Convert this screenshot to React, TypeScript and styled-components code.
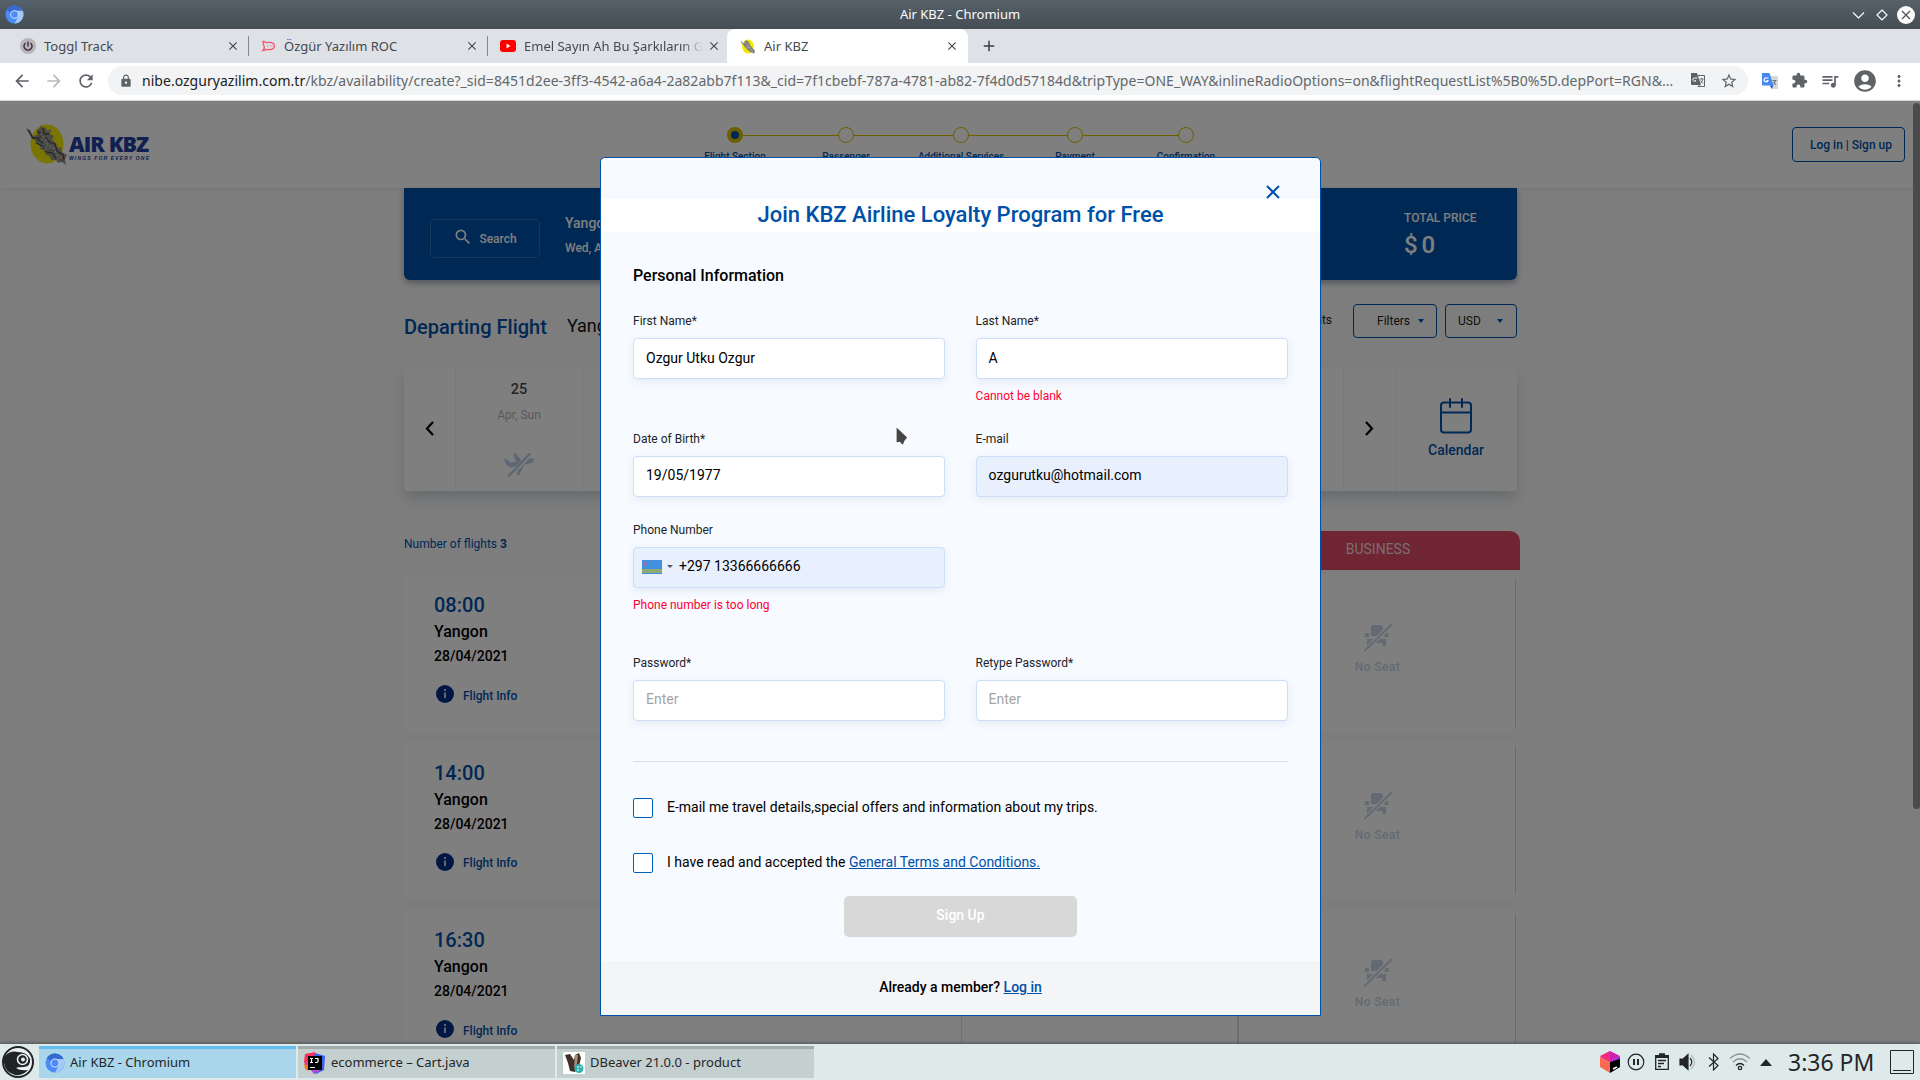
import React from "react";
import styled, { createGlobalStyle } from "styled-components";
import {
  MdArrowBack, MdArrowForward, MdRefresh, MdLock, MdGTranslate, MdStarBorder, MdExtension,
  MdQueueMusic, MdAccountCircle, MdMoreVert, MdSearch, MdClose, MdAdd,
} from "react-icons/md";

const GlobalStyle = createGlobalStyle`
  *, *::before, *::after { box-sizing: border-box; }
  body { margin: 0; overflow: hidden; font-family: Roboto, "Liberation Sans", sans-serif; }
  svg { display: block; flex: none; }
`;

const blue = "#0050a8";
const ui = `"Noto Sans", "DejaVu Sans", sans-serif`;

const Desktop = styled.div`
  width: 1920px;
  height: 1080px;
  display: flex;
  flex-direction: column;
  overflow: hidden;
`;

/* ---------- window frame ---------- */
const TitleBar = styled.div`
  height: 29px;
  display: grid;
  grid-template-columns: 1fr auto 1fr;
  align-items: center;
  padding: 0 5px;
  background: linear-gradient(#566169, #454c54);
  color: #fcfcfc;
  font: 13px/29px ${ui};
`;
const WindowButtons = styled.div`
  display: flex;
  justify-content: flex-end;
`;
const TabStrip = styled.div`
  height: 34px;
  display: flex;
  align-items: center;
  background: #dee1e6;
  padding-left: 10px;
`;
const Tab = styled.div<{ $active?: boolean; $line?: boolean }>`
  position: relative;
  width: ${(p) => (p.$active ? 241 : 239)}px;
  height: 34px;
  display: flex;
  align-items: center;
  padding: 0 9px 0 ${(p) => (p.$active ? 13 : 10)}px;
  border-radius: 8px 8px 0 0;
  background: ${(p) => (p.$active ? "#fff" : "transparent")};
  color: #45494d;
  &::after {
    content: "";
    display: ${(p) => (p.$line ? "block" : "none")};
    position: absolute;
    right: 0;
    top: 7px;
    height: 20px;
    width: 1px;
    background: #85888c;
  }
`;
const TabTitle = styled.span<{ $fade?: boolean }>`
  flex: 1;
  margin: 0 4px 0 8px;
  white-space: nowrap;
  font: 13px/20px ${ui};
  ${(p) => p.$fade && "mask-image: linear-gradient(90deg, #000 88%, transparent);"}
`;
const NewTab = styled.div`
  margin-left: 12px;
  color: #3c4043;
`;
const Toolbar = styled.div`
  height: 38px;
  display: flex;
  align-items: center;
  padding: 0 12px 2px;
  background: #fff;
  border-bottom: 1px solid #d5d7db;
  color: #5f6368;
`;
const NavButtons = styled.div`
  display: flex;
  gap: 12px;
  width: 96px;
`;
const Omnibox = styled.div`
  width: 1640px;
  height: 29px;
  display: flex;
  align-items: center;
  padding: 0 10px 0 11px;
  border-radius: 15px;
  background: #f1f3f4;
`;
const Url = styled.div`
  flex: 1;
  margin-left: 9px;
  white-space: nowrap;
  color: #64686c;
  font: 14px/28px ${ui};
  letter-spacing: 0.027px;
  span { color: #202124; }
`;
const OmniIcons = styled.div`
  display: flex;
  gap: 14px;
`;
const Extensions = styled.div`
  display: flex;
  align-items: center;
  justify-content: space-between;
  margin-left: 13px;
  width: 147px;
`;

/* ---------- page ---------- */
const Page = styled.div`
  position: relative;
  height: 943px;
  overflow: hidden;
  background: #fbfbfb;
`;
const Header = styled.header`
  height: 87px;
  display: grid;
  grid-template-columns: 701px 467px 1fr;
  padding: 0 15px 0 26px;
  background: #fff;
  box-shadow: 0 1px 5px rgba(0, 0, 0, 0.08);
`;
const Brand = styled.div`
  display: flex;
  padding-top: 22px;
`;
const BrandText = styled.div`
  margin: 10px 0 0 1px;
  color: #2340a0;
  width: 82px;
`;
const BrandName = styled.div`
  font: 800 21.5px/22px "Open Sans", sans-serif;
  letter-spacing: -0.9px;
  white-space: nowrap;
`;
const BrandLine = styled.div`
  font: italic 700 5px/6px "Liberation Sans", sans-serif;
  letter-spacing: 1.15px;
  white-space: nowrap;
`;
const Steps = styled.div`
  display: flex;
  padding-top: 26px;
`;
const Step = styled.div`
  width: 16px;
  display: flex;
  flex-direction: column;
  align-items: center;
  gap: 8px;
  white-space: nowrap;
  color: ${blue};
  font: 500 10px/12px Roboto, sans-serif;
`;
const StepDot = styled.div<{ $on?: boolean }>`
  flex: none;
  width: 16px;
  height: 16px;
  border-radius: 50%;
  border: ${(p) => (p.$on ? "4px" : "1px")} solid #d8be00;
  background: ${(p) => (p.$on ? blue : "#fff")};
`;
const StepLine = styled.div<{ $span: number }>`
  flex: ${(p) => p.$span};
  height: 1px;
  margin-top: 8px;
  background: #d8be00;
`;
const LoginButton = styled.button`
  justify-self: end;
  width: 113px;
  height: 35px;
  margin-top: 26px;
  padding: 0 0 0 5px;
  border: 1px solid ${blue};
  border-radius: 4px;
  background: none;
  color: ${blue};
  font: 500 12px Roboto, sans-serif;
`;
const Content = styled.main`
  width: 1113px;
  margin-left: 404px;
`;
const SearchPanel = styled.section`
  height: 92px;
  display: flex;
  padding: 0 0 0 26px;
  border-radius: 0 0 6px 6px;
  background: ${blue};
  color: #fff;
  box-shadow: 0 3px 6px rgba(0, 30, 60, 0.35);
`;
const SearchButton = styled.div`
  width: 110px;
  height: 39px;
  margin-top: 31px;
  display: flex;
  align-items: center;
  justify-content: center;
  gap: 6px;
  border: 1px solid #2c6cb4;
  border-radius: 5px;
  font: 500 12px Roboto, sans-serif;
  svg { margin-top: -4px; }
`;
const Route = styled.div`
  margin: 25px 0 0 25px;
  font: 500 14px/20px Roboto, sans-serif;
  small { display: block; margin-top: 5px; font-size: 12px; }
`;
const Total = styled.div`
  width: 113px;
  margin: 20px 0 0 auto;
  font: 500 12px/20px Roboto, sans-serif;
  strong { display: block; margin-top: 2px; font: 500 24px/30px Roboto, sans-serif; word-spacing: -2px; }
`;
const DepartRow = styled.div`
  height: 88px;
  display: flex;
  padding-top: 24px;
`;
const DepartTitle = styled.h2`
  margin: 10px 20px 0 0;
  color: ${blue};
  font: 500 20px/26px Roboto, sans-serif;
`;
const DepartFrom = styled.span`
  margin-top: 9px;
  font: 400 18px/26px Roboto, sans-serif;
  color: #111;
`;
const FilterSide = styled.div`
  margin-left: auto;
  display: flex;
  font: 400 12px/32px Roboto, sans-serif;
  color: #222;
`;
const Select = styled.div<{ $w: number; $l: number; $gap: number }>`
  width: ${(p) => p.$w}px;
  height: 34px;
  margin-left: 8px;
  padding-left: ${(p) => p.$l}px;
  display: flex;
  align-items: center;
  gap: ${(p) => p.$gap}px;
  border: 1px solid ${blue};
  border-radius: 4px;
  &:first-of-type { margin-left: 21px; }
`;
const Caret = styled.i<{ $c?: string; $s?: number }>`
  border: ${(p) => p.$s || 3.5}px solid transparent;
  border-top: ${(p) => p.$s || 4}px solid ${(p) => p.$c || blue};
  border-bottom: 0;
`;
const DateStrip = styled.section`
  height: 123px;
  display: flex;
  border-radius: 4px;
  background: #fff;
  box-shadow: 0 8px 14px rgba(30, 60, 90, 0.18);
`;
const StripCell = styled.div<{ $w?: number }>`
  ${(p) => (p.$w ? `width: ${p.$w}px;` : "flex: 1;")}
  display: flex;
  flex-direction: column;
  align-items: center;
  justify-content: center;
  padding-bottom: 3px;
  border-right: 1px solid #eee;
  color: ${blue};
  font: 500 14px/18px Roboto, sans-serif;
  &:last-child { border: 0; padding-right: 1px; }
`;
const DayNumber = styled.div`
  color: #4b4b4b;
  font: 500 14.5px/20px Roboto, sans-serif;
`;
const DayName = styled.div`
  margin: 6px 0 29px;
  color: #b3b3b3;
  font: 400 12px/18px Roboto, sans-serif;
`;
const Results = styled.div`
  height: 84px;
  display: flex;
  justify-content: space-between;
  padding-top: 40px;
  margin-right: -3px;
  color: ${blue};
  font: 400 12px/26px Roboto, sans-serif;
`;
const Business = styled.div`
  width: 282px;
  height: 39px;
  padding-right: 2px;
  border-radius: 0 10px 0 0;
  background: #e04a64;
  color: #f3dde0;
  text-align: center;
  font: 400 14px/37px Roboto, sans-serif;
`;
const Card = styled.article`
  height: 156px;
  margin-bottom: 11.4px;
  display: grid;
  grid-template-columns: 558px 277px 277px;
  border-radius: 4px;
  background: #fff;
`;
const FlightCell = styled.div`
  padding: 17.4px 0 0 30px;
  border-right: 1px solid #e2e2e2;
`;
const EmptyCell = styled.div`
  border-right: 2px solid #dedede;
`;
const SeatCell = styled.div`
  margin: 4px 0;
  display: flex;
  flex-direction: column;
  align-items: center;
  padding: 45.4px 0 0 1px;
  border-right: 1px solid #d4d4d4;
  color: #c7d5e4;
  font: 500 12px/18px Roboto, sans-serif;
  letter-spacing: 0.4px;
  svg { margin-bottom: 6px; }
`;
const Time = styled.div`
  color: ${blue};
  font: 500 20px/26px Roboto, sans-serif;
`;
const City = styled.div`
  font: 500 16px/26px Roboto, sans-serif;
  margin-top: 1px;
`;
const Day = styled.div`
  font: 500 14px/22px Roboto, sans-serif;
`;
const Info = styled.div`
  display: flex;
  align-items: center;
  gap: 9px;
  margin: 16.5px 0 0 2px;
  color: ${blue};
  font: 500 12px/18px Roboto, sans-serif;
  span { padding-top: 3px; }
`;

/* ---------- dialog ---------- */
const Overlay = styled.div`
  position: absolute;
  inset: 0;
  background: rgba(0, 0, 0, 0.5);
`;
const Scrollbar = styled.div`
  position: absolute;
  right: 0;
  top: 2px;
  width: 7px;
  height: 706px;
  border-radius: 4px;
  background: #4b4b4b;
`;
const Dialog = styled.div`
  width: 721px;
  height: 859px;
  margin: 56px 0 0 600px;
  display: flex;
  flex-direction: column;
  border: 1px solid ${blue};
  border-radius: 5px 5px 0 0;
  background: #f7faff;
  overflow: hidden;
`;
const DialogTop = styled.div`
  height: 41px;
  flex: none;
  display: flex;
  justify-content: flex-end;
  padding: 27px 40px 0 0;
`;
const DialogTitle = styled.h1`
  flex: none;
  height: 33px;
  margin: 0;
  background: #fff;
  color: ${blue};
  text-align: center;
  font: 500 22px/31px Roboto, sans-serif;
`;
const Form = styled.div`
  flex: 1;
  display: flex;
  flex-direction: column;
  padding: 34px 32px 0;
`;
const SectionTitle = styled.h3`
  margin: 0 0 27px;
  font: 500 16px/20px Roboto, sans-serif;
`;
const Fields = styled.div`
  display: grid;
  grid-template-columns: 312px 312px;
  grid-template-rows: 118px 91px 133px 66px;
  column-gap: 30.6px;
`;
const Field = styled.div<{ $col: number }>`
  grid-column: ${(p) => p.$col};
  font: 400 12px/16px Roboto, sans-serif;
  color: #212529;
`;
const Box = styled.div<{ $filled?: boolean; $lift?: number; $hint?: boolean }>`
  height: 41px;
  margin: 9px 0;
  display: flex;
  align-items: center;
  padding: 0 12px ${(p) => p.$lift || 1}px;
  border: 1px solid #cbdff8;
  border-radius: 4px;
  background: ${(p) => (p.$filled ? "#e8f0fe" : "#fff")};
  color: ${(p) => (p.$hint ? "#a5a5a5" : "#000")};
  box-shadow: 0 3px 8px rgba(60, 90, 140, 0.09);
  font-size: 14px;
`;
const PhonePrefix = styled.div`
  display: flex;
  align-items: center;
  gap: 5px;
  margin: 1px 6px 0 -4px;
`;
const ErrorText = styled.div`
  color: #ff0033;
`;
const Rule = styled.div`
  height: 1px;
  margin: 40px 0 36px;
  background: #dadfe4;
`;
const CheckRow = styled.div`
  height: 20px;
  display: flex;
  gap: 14px;
  margin-bottom: 35px;
  font: 400 14px/18px Roboto, sans-serif;
  & + & { margin-bottom: 23px; }
`;
const Check = styled.div`
  width: 20px;
  height: 20px;
  border: 1px solid #0060bb;
  border-radius: 2px;
  background: #fff;
`;
const Link = styled.span`
  color: ${blue};
  text-decoration: underline;
`;
const Submit = styled.button`
  align-self: center;
  width: 233px;
  height: 41px;
  padding: 0 0 3px;
  border: 0;
  border-radius: 5px;
  background: #d8d8d8;
  color: #fff;
  font: 500 14px Roboto, sans-serif;
`;
const DialogFooter = styled.div`
  flex: none;
  height: 54px;
  background: #f4f5f7;
  text-align: center;
  font: 500 14px/52px Roboto, sans-serif;
`;
const Pointer = styled.svg`
  position: absolute;
  left: 894px;
  top: 323px;
`;

/* ---------- taskbar ---------- */
const Taskbar = styled.div`
  position: relative;
  height: 36px;
  display: flex;
  align-items: center;
  gap: 2px;
  padding-left: 2px;
  background: #deeaea;
  color: #232629;
  box-shadow: 0 -1px 3px rgba(0, 0, 0, 0.35);
`;
const Task = styled.div<{ $active?: boolean }>`
  width: 257px;
  height: 32px;
  display: flex;
  align-items: center;
  gap: 6px;
  padding: 0 6px;
  border-top: 3px solid ${(p) => (p.$active ? "#64bdec" : "#a1abab")};
  background: ${(p) => (p.$active ? "#a9d6ea" : "#c4cfcf")};
  font: 13px/24px ${ui};
  span { padding-bottom: 3px; }
  svg { margin: 0 -1px 1px 0; }
  &:first-of-type { margin-left: 3px; }
`;
const Tray = styled.div`
  margin-left: auto;
  width: 320px;
  display: flex;
  align-items: center;
`;
const TrayIcon = styled.div<{ $w: number }>`
  width: ${(p) => p.$w}px;
`;
const Clock = styled.div`
  width: 102px;
  font: 23px/34px ${ui};
  white-space: nowrap;
`;

const Chromium = ({ size = 20 }: { size?: number }) => (
  <svg width={size} height={size} viewBox="0 0 20 20">
    <circle cx="10" cy="10" r="9.5" fill="#4b8bf5" />
    <path d="M10 10 1.8 5.2A9.5 9.5 0 0 1 18.5 6Z" fill="#356ad0" />
    <path d="M10 6h8.600A9.500 9.500 0 0 1 10 19.500L14 12Z" fill="#a5c8fb" />
    <circle cx="10" cy="10" r="4.6" fill="#c9defd" />
    <circle cx="10" cy="10" r="3.5" fill="#4e8bf2" />
  </svg>
);

const Angel = ({ w, h }: { w: number; h: number }) => (
  <svg width={w} height={h} viewBox="0 0 42 42">
    <ellipse cx="21" cy="21" rx="16.5" ry="19.5" fill="#f4e800" />
    <path d="M0 5l4 2 3 6 4-1 0-5 3-2 1-3 2 3 3-1 1 4 4-2-1 5 4 2-2 4 4 3 1 4 4 1 1 4 5 3-2 4 1 6-4-3-4 1-2-3-5 0-1-4-4-1-2-5-4-1 0-4-4-2-1-3-3-1-3-6Z" fill="#96948a" />
    <path d="M2 7l5 8 5 0M12 8l3 4-3 5 5 3M17 5l1 6 5 0M10 20l6 3 4 6 7 1 3 6M19 14l4 5 6 2 2 7 6 4 1 5" fill="none" stroke="#4d4c48" strokeWidth="1.300" />
    <path d="M14 16l5 2 1 5 5 2 4 6" fill="none" stroke="#74b3cf" strokeWidth="1.500" strokeDasharray="3 2" />
    <path d="M14 11l6 5 2 6 6 3 3 7 6 4M15 24l6 4" fill="none" stroke="#d8d2c4" strokeWidth="1.200" strokeDasharray="2 2" />
    <path d="M13 13l2 2M24 27l3 1M34 36l3 2" stroke="#a8624e" strokeWidth="1.200" />
  </svg>
);

const NoFlight = () => (
  <svg width="31" height="24" viewBox="0 0 31 24" fill="#b9cfe6">
    <path d="M0 6.500l2.500-.5 3.500 3.500 6.500-.500L9 .8l2.500-.8 6 7.500 7-2Q29 4.500 30.500 6.500 30.500 9 26 10.500L9 14Q4 15 2 11Z" />
    <path d="M14 13.500l6-2-2 5-3 5.500-2 .5Z" />
    <path d="M27 0 5 24" stroke="#fff" strokeWidth="4.500" />
    <path d="M25.500 1 5 22.800" stroke="#b9cfe6" strokeWidth="2.400" strokeLinecap="round" />
  </svg>
);

const NoSeatIcon = () => (
  <svg width="28" height="28" viewBox="0 0 28 28" fill="#c7d5e4">
    <path d="M7 3.500Q7 1 9.500 1h7Q19 1 19 3.500V12H7ZM1 9h4v4H1ZM20.500 9h4v4h-4ZM3 15h19v7h-3.500v-3h-12v2H3Z" />
    <path d="M27 1 1 26.500" stroke="#fff" strokeWidth="4.600" />
    <path d="M27 1 1 26.500" stroke="#c7d5e4" strokeWidth="2" strokeLinecap="round" />
  </svg>
);

const InfoIcon = () => (
  <svg width="18" height="18" viewBox="0 0 18 18">
    <circle cx="9" cy="9" r="9" fill="#003087" />
    <path d="M9 4v2M9 7.500V13" stroke="#dbe3ef" strokeWidth="1.800" />
  </svg>
);

const Chevron = ({ left }: { left?: boolean }) => (
  <svg width="9" height="15" viewBox="0 0 9 15" fill="none" stroke="#000" strokeWidth="2.200">
    <path d={left ? "M8 1 2 7.500 8 14" : "M1 1l6 6.500L1 14"} />
  </svg>
);

const CalendarSvg = styled.svg`
  margin-bottom: 7px;
`;
const CalendarIcon = () => (
  <CalendarSvg width="32" height="36" viewBox="0 0 32 36" fill="none" stroke={blue} strokeWidth="2">
    <rect x="1" y="4.500" width="30" height="30" rx="3" />
    <path d="M1 14.500h30M10 1v8M22 1v8" strokeLinecap="round" />
  </CalendarSvg>
);

const Flag = () => (
  <svg width="20" height="14" viewBox="0 0 20 14">
    <rect width="20" height="14" fill="#418fde" />
    <path d="M0 10h20M0 12h20" stroke="#a9b44f" strokeWidth="1.400" />
    <path d="M3 1.500v4M1 3.500h4" stroke="#c8648a" strokeWidth="1.200" />
  </svg>
);

const steps = [
  { name: "Flight Section", span: 0 },
  { name: "Passenger", span: 95 },
  { name: "Additional Services", span: 99 },
  { name: "Payment", span: 98 },
  { name: "Confirmation", span: 95 },
];
const times = ["08:00", "14:00", "16:30"];

export default function App() {
  return (
    <Desktop>
      <GlobalStyle />
      <TitleBar>
        <Chromium size={19} />
        <span>Air KBZ - Chromium</span>
        <WindowButtons>
          <svg width="64" height="20" viewBox="0 0 64 20" fill="none" stroke="#fcfcfc" strokeWidth="1.200">
            <path d="M2 7.500 7.500 13 13 7.500M31 5l5 5-5 5-5-5Z" />
            <circle cx="55" cy="10" r="9" fill="#fcfcfc" stroke="none" />
            <path d="M51 6l8 8M59 6l-8 8" stroke="#4b535b" />
          </svg>
        </WindowButtons>
      </TitleBar>
      <TabStrip>
        <Tab $line>
          <svg width="16" height="16" viewBox="0 0 16 16">
            <circle cx="8" cy="8" r="8" fill="#b8b5b6" />
            <path d="M8 3.500v5M5.500 5a4 4 0 1 0 5 0" fill="none" stroke="#412a4c" strokeWidth="1.400" />
          </svg>
          <TabTitle>Toggl Track</TabTitle>
          <MdClose size={14} />
        </Tab>
        <Tab $line>
          <svg width="17" height="12" viewBox="-3 0 17 12" fill="none" stroke="#f5556c" strokeWidth="1.300">
            <path d="M1 1.500q2 0 3 1.200Q12.500 1.500 12.500 6T4 9.300Q3 10.500 1 10.500q2-2 1-4.500T1 1.500Z" />
            <path d="M5 6h1M7.300 6h1M9.500 6h1" strokeWidth="1.200" />
          </svg>
          <TabTitle>Özgür Yazılım ROC</TabTitle>
          <MdClose size={14} />
        </Tab>
        <Tab>
          <svg width="18" height="12" viewBox="-2 0 18 12">
            <rect width="16" height="12" rx="3" fill="#f00" />
            <path d="M6.500 3.500v5l4-2.500Z" fill="#fff" />
          </svg>
          <TabTitle $fade>Emel Sayın Ah Bu Şarkıların G</TabTitle>
          <MdClose size={14} />
        </Tab>
        <Tab $active>
          <Angel w={16} h={15} />
          <TabTitle>Air KBZ</TabTitle>
          <MdClose size={14} />
        </Tab>
        <NewTab><MdAdd size={18} /></NewTab>
      </TabStrip>
      <Toolbar>
        <NavButtons>
          <MdArrowBack size={20} />
          <MdArrowForward size={20} color="#b9bbbe" />
          <MdRefresh size={20} />
        </NavButtons>
        <Omnibox>
          <MdLock size={14} />
          <Url>
            <span>nibe.ozguryazilim.com.tr</span>
            /kbz/availability/create?_sid=8451d2ee-3ff3-4542-a6a4-2a82abb7f113&amp;_cid=7f1cbebf-787a-4781-ab82-7f4d0d57184d&amp;tripType=ONE_WAY&amp;inlineRadioOptions=on&amp;flightRequestList%5B0%5D.depPort=RGN&amp;...
          </Url>
          <OmniIcons>
            <svg width="16" height="16" viewBox="0 0 16 16">
              <path d="M1 1h6l4 12H2q-1 0-1-1Z" fill="#5f6368" />
              <path d="M8 3.500h6.500v11H8l2-2" fill="none" stroke="#5f6368" />
              <path d="M7.500 6H5a1.700 1.700 0 1 0 1 2.500H5" fill="none" stroke="#f1f3f4" />
              <path d="M9.500 7h4M11.500 6v1M13 7q-1 3-2.500 4M10.500 8.500l2.500 3" fill="none" stroke="#5f6368" strokeWidth=".9" />
            </svg>
            <MdStarBorder size={18} />
          </OmniIcons>
        </Omnibox>
        <Extensions>
          <svg width="18" height="18" viewBox="0 0 18 18">
            <path d="M7 4h9q1 0 1 1v11q0 1-1 1h-5Z" fill="#d5d8dc" />
            <path d="M1 1h7.500l4 12.500H2q-1 0-1-1Z" fill="#4688f1" />
            <path d="M9 13.500h3.500L10.500 17Z" fill="#3057c4" />
            <path d="M7.500 6H5.500a2 2 0 1 0 1.500 2.500H5.500" fill="none" stroke="#fff" strokeWidth="1.100" />
            <path d="M11.500 8.500h4M14.500 8.500q-1 3-2 4M12.500 10l2.500 3" fill="none" stroke="#6b7176" />
          </svg>
          <MdExtension size={17} />
          <MdQueueMusic size={20} />
          <MdAccountCircle size={26} />
          <MdMoreVert size={18} />
        </Extensions>
      </Toolbar>

      <Page>
        <Header>
          <Brand>
            <Angel w={42} h={42} />
            <BrandText>
              <BrandName>AIR KBZ</BrandName>
              <BrandLine>WINGS FOR EVERY ONE</BrandLine>
            </BrandText>
          </Brand>
          <Steps>
            {steps.map(({ name, span }, i) => (
              <React.Fragment key={name}>
                {i > 0 && <StepLine $span={span} />}
                <Step>
                  <StepDot $on={i === 0} />
                  {name}
                </Step>
              </React.Fragment>
            ))}
          </Steps>
          <LoginButton>Log in | Sign up</LoginButton>
        </Header>
        <Content>
          <SearchPanel>
            <SearchButton><MdSearch size={20} />Search</SearchButton>
            <Route>Yangon<small>Wed, Apr</small></Route>
            <Total>TOTAL PRICE<strong>$ 0</strong></Total>
          </SearchPanel>
          <DepartRow>
            <DepartTitle>Departing Flight</DepartTitle>
            <DepartFrom>Yangon</DepartFrom>
            <FilterSide>
              <span>Amounts</span>
              <Select $w={84} $l={23} $gap={8}>Filters<Caret /></Select>
              <Select $w={72} $l={12} $gap={16}>USD<Caret /></Select>
            </FilterSide>
          </DepartRow>
          <DateStrip>
            <StripCell $w={52}><Chevron left /></StripCell>
            <StripCell $w={127}>
              <DayNumber>25</DayNumber>
              <DayName>Apr, Sun</DayName>
              <NoFlight />
            </StripCell>
            <StripCell />
            <StripCell $w={52}><Chevron /></StripCell>
            <StripCell $w={121}><CalendarIcon />Calendar</StripCell>
          </DateStrip>
          <Results>
            <span>Number of flights <b>3</b></span>
            <Business>BUSINESS</Business>
          </Results>
          {times.map((t) => (
            <Card key={t}>
              <FlightCell>
                <Time>{t}</Time>
                <City>Yangon</City>
                <Day>28/04/2021</Day>
                <Info><InfoIcon /><span>Flight Info</span></Info>
              </FlightCell>
              <EmptyCell />
              <SeatCell><NoSeatIcon />No Seat</SeatCell>
            </Card>
          ))}
        </Content>
        <Overlay>
          <Dialog>
            <DialogTop>
              <svg width="14" height="14" viewBox="0 0 14 14" stroke={blue} strokeWidth="2">
                <path d="M1 1l12 12M13 1 1 13" />
              </svg>
            </DialogTop>
            <DialogTitle>Join KBZ Airline Loyalty Program for Free</DialogTitle>
            <Form>
              <SectionTitle>Personal Information</SectionTitle>
              <Fields>
                <Field $col={1}>First Name*<Box>Ozgur Utku Ozgur</Box></Field>
                <Field $col={2}>Last Name*<Box>A</Box><ErrorText>Cannot be blank</ErrorText></Field>
                <Field $col={1}>Date of Birth*<Box $lift={3}>19/05/1977</Box></Field>
                <Field $col={2}>E-mail<Box $lift={3} $filled>ozgurutku@hotmail.com</Box></Field>
                <Field $col={1}>
                  Phone Number
                  <Box $lift={3} $filled>
                    <PhonePrefix><Flag /><Caret $c="#555" $s={3} /></PhonePrefix>
                    +297 13366666666
                  </Box>
                  <ErrorText>Phone number is too long</ErrorText>
                </Field>
                <Field $col={1}>Password*<Box $lift={3} $hint>Enter</Box></Field>
                <Field $col={2}>Retype Password*<Box $lift={3} $hint>Enter</Box></Field>
              </Fields>
              <Rule />
              <CheckRow><Check />E-mail me travel details,special offers and information about my trips.</CheckRow>
              <CheckRow><Check /><span>I have read and accepted the <Link>General Terms and Conditions.</Link></span></CheckRow>
              <Submit>Sign Up</Submit>
            </Form>
            <DialogFooter>Already a member? <Link>Log in</Link></DialogFooter>
          </Dialog>
        </Overlay>
        <Scrollbar />
        <Pointer width="16" height="24" viewBox="0 0 16 24">
          <path d="M2 2v17l3.500-.5L9 22l2-5 3-3.500Z" fill="#454545" stroke="#fff" strokeWidth="1.200" />
        </Pointer>
      </Page>

      <Taskbar>
        <svg width="32" height="32" viewBox="0 0 32 32">
          <circle cx="16" cy="16" r="15" fill="#e9f1f1" stroke="#1f2426" strokeWidth="2" />
          <path d="M2 11Q8 4 16 6q9 0 12 7 1 7-6 8-6 0-8 1 4 3 12 2-5 6-13 5Q3 26 2 17Z" fill="#1f2426" />
          <circle cx="20.500" cy="13.500" r="5" fill="none" stroke="#e9f1f1" strokeWidth="1.600" />
          <circle cx="21" cy="13.500" r="2" fill="#e9f1f1" />
        </svg>
        <Task $active><Chromium size={20} /><span>Air KBZ - Chromium</span></Task>
        <Task>
          <svg width="22" height="22" viewBox="0 0 22 22">
            <path d="M1 2 11 0v12L3 18 0 10Z" fill="#fe315d" />
            <path d="M11 1l10 3-1 14-8 4-6-5Z" fill="#3b62f0" />
            <path d="M1 11l8-2 8 9-7 4Z" fill="#b24bd8" />
            <path d="M0 12l5 2-1 5-3-2Z" fill="#f97a12" />
            <rect x="4" y="4" width="14" height="14" fill="#000" />
            <path d="M6 6.500h3M7.500 6.500v4M6 10.500h3M11 6.500h3v3q0 1-1.500 1H11M6 15.500h5" stroke="#fff" fill="none" strokeWidth="1.200" />
          </svg>
          <span>ecommerce – Cart.java</span>
        </Task>
        <Task>
          <svg width="22" height="22" viewBox="0 0 22 22">
            <rect width="22" height="22" rx="1" fill="#fff" />
            <path d="M2 3l5-1 4 6 1-5 4-2 2 5-2 8-4 6-5-1-2-8Z" fill="#40302a" />
            <path d="M12 3l3 0-1 9-3 4Z" fill="#a58a78" />
            <circle cx="16" cy="16.500" r="4.500" fill="#2fb3b5" />
            <path d="M14 15h2M14 18h2M17 15h1.500" stroke="#fff" />
          </svg>
          <span>DBeaver 21.0.0 - product</span>
        </Task>
        <Tray>
          <TrayIcon $w={27}>
            <svg width="20" height="22" viewBox="0 0 20 22">
              <path d="M10 0 20 5 10 11 0 6Z" fill="#d01fb4" />
              <path d="M0 6l10 5v11L0 16Z" fill="#fd6a52" />
              <path d="M0 5 10 0v11Z" fill="#f42a7c" />
              <path d="M20 5v6l-10 0Z" fill="#9a22dd" />
              <path d="M20 8v8l-10 6V11Z" fill="#000" />
              <path d="M13 18l4-2" stroke="#fff" strokeWidth="1.500" />
            </svg>
          </TrayIcon>
          <TrayIcon $w={27}>
            <svg width="18" height="18" viewBox="0 0 18 18" fill="none" stroke="#232629">
              <circle cx="9" cy="9" r="7.800" strokeWidth="1.200" />
              <path d="M7 6v6M11 6v6" strokeWidth="2" />
            </svg>
          </TrayIcon>
          <TrayIcon $w={25}>
            <svg width="16" height="18" viewBox="0 0 16 18" fill="none" stroke="#232629" strokeWidth="1.300">
              <path d="M1.700 3v13.300h12.600V3" />
              <path d="M1 3.500h14M5 1.700h6" strokeWidth="3" />
              <path d="M4 7.500h8M4 10.500h6M4 13.500h3" />
            </svg>
          </TrayIcon>
          <TrayIcon $w={28}>
            <svg width="18" height="18" viewBox="0 0 18 18" fill="none" stroke="#232629" strokeWidth="1.200">
              <path d="M1 6h1.500v6H1ZM3.500 6.500 9 1.500v15l-5.500-5Z" fill="#232629" />
              <path d="M11 5q3.500 4 0 8" />
              <path d="M12 2q7 7 0 14" stroke="#b1b9ba" />
            </svg>
          </TrayIcon>
          <TrayIcon $w={22}>
            <svg width="13" height="18" viewBox="0 0 13 18" fill="none" stroke="#232629" strokeWidth="1.200">
              <path d="M2 4.500l9 8L6.500 17V1L11 5.500l-9 8" />
            </svg>
          </TrayIcon>
          <TrayIcon $w={31}>
            <svg width="22" height="18" viewBox="0 0 22 18" fill="none" stroke="#232629" strokeWidth="1.300">
              <path d="M1 5.500q10-9 20 0" stroke="#8b9293" />
              <path d="M4 9q7-6.500 14 0" stroke="#8b9293" />
              <path d="M7 12.500q4-4 8 0" />
              <circle cx="11" cy="15" r="1.700" />
            </svg>
          </TrayIcon>
          <TrayIcon $w={28}>
            <svg width="12" height="7" viewBox="0 0 12 7"><path d="M0 7 6 0l6 7Z" fill="#232629" /></svg>
          </TrayIcon>
          <Clock>3:36 PM</Clock>
          <svg width="24" height="24" viewBox="0 0 24 24" fill="none" stroke="#232629">
            <path d="M.5.500h23v23H.500ZM3 20.500h18" />
          </svg>
        </Tray>
      </Taskbar>
    </Desktop>
  );
}
